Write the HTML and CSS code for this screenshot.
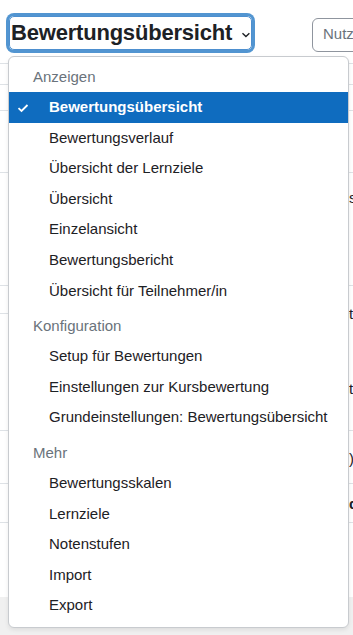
FILE: index.html
```html
<!DOCTYPE html>
<html lang="de">
<head>
<meta charset="utf-8">
<title>Bewertungsübersicht</title>
<link rel="stylesheet" href="styles.css">
</head>
<body>
<div class="page">
  <div class="toolbar">
    <div class="select">
      <span class="select-label">Bewertungsübersicht</span>
      <svg class="chev" width="10" height="6" viewBox="0 0 10 6"><path d="M1.5 1.2 L5 4.6 L8.5 1.2" fill="none" stroke="#1d2125" stroke-width="1.4"/></svg>
    </div>
    <div class="divider"></div>
    <div class="search">Nutzer/in suchen</div>
  </div>
  <div class="table">
    <div class="row r1"></div>
    <div class="row r2"></div>
    <div class="row r3"></div>
    <div class="row r4"><span class="frag">s</span></div>
    <div class="row r5"><span class="frag">t</span></div>
    <div class="row r6"><span class="frag">t</span></div>
    <div class="row r7"><span class="frag">)</span></div>
    <div class="row r8"><span class="frag">d</span></div>
  </div>
  <div class="footer"></div>

  <div class="menu">
    <div class="header first">Anzeigen</div>
    <div class="item active">
      <svg class="check" width="12" height="10" viewBox="0 0 12 10"><path d="M1.5 5.2 L4.5 8 L10.5 2" fill="none" stroke="#fff" stroke-width="1.8"/></svg>
      Bewertungsübersicht
    </div>
    <div class="item">Bewertungsverlauf</div>
    <div class="item">Übersicht der Lernziele</div>
    <div class="item">Übersicht</div>
    <div class="item">Einzelansicht</div>
    <div class="item">Bewertungsbericht</div>
    <div class="item">Übersicht für Teilnehmer/in</div>
    <div class="header">Konfiguration</div>
    <div class="item">Setup für Bewertungen</div>
    <div class="item">Einstellungen zur Kursbewertung</div>
    <div class="item">Grundeinstellungen: Bewertungsübersicht</div>
    <div class="header">Mehr</div>
    <div class="item">Bewertungsskalen</div>
    <div class="item">Lernziele</div>
    <div class="item">Notenstufen</div>
    <div class="item">Import</div>
    <div class="item">Export</div>
  </div>
</div>
</body>
</html>
```
FILE: styles.css
```css
* { box-sizing: border-box; }
html, body { margin: 0; padding: 0; }
body {
  font-family: "Liberation Sans", Arial, sans-serif;
  color: #1d2125;
  background: #fff;
}
.page {
  position: relative;
  width: 353px;
  height: 635px;
  overflow: hidden;
  display: flex;
  flex-direction: column;
}
.toolbar {
  display: flex;
  align-items: flex-start;
  height: 63px;
  padding: 16px 0 0 9px;
  flex-shrink: 0;
}
.select {
  display: flex;
  align-items: center;
  height: 34px;
  width: 243px;
  padding: 0 0 0 1px;
  border: 1px solid #4d8fcf;
  border-radius: 5px;
  box-shadow: 0 0 0 3px rgba(15,108,191,.72);
}
.select-label {
  font-size: 22px;
  font-weight: bold;
  letter-spacing: -0.2px;
  white-space: nowrap;
}
.chev { margin-left: 9px; margin-top: 3px; }
.divider {
  width: 1px;
  height: 41px;
  margin: -1px 0 0 30px;
  background: #dee2e6;
}
.search {
  margin: 2px 0 0 30px;
  height: 34px;
  width: 140px;
  flex-shrink: 0;
  border: 1px solid #8f959e;
  border-radius: 6px;
  padding: 6px 0 0 10px;
  font-size: 15px;
  color: #6a737b;
  white-space: nowrap;
}
.table {
  flex: 1;
  border-top: 1px solid #dee2e6;
}
.row {
  border-bottom: 1px solid #dee2e6;
  position: relative;
}
.r1 { height: 21px; }
.r2 { height: 26px; }
.r3 { height: 62px; }
.r4 { height: 113px; }
.r5 { height: 28px; }
.r6 { height: 117px; }
.r7 { height: 53px; }
.r8 { height: 39px; }
.frag {
  position: absolute;
  left: 349px;
  font-size: 15px;
  line-height: 18px;
  color: #1d2125;
}
.r4 .frag { top: 16px; }
.r5 .frag { top: 19px; }
.r6 .frag { top: 66px; }
.r7 .frag { top: 19px; }
.r8 .frag { top: 11px; font-weight: bold; }
.footer {
  height: 38px;
  background: #f0f0f0;
  flex-shrink: 0;
}
.menu {
  position: absolute;
  left: 8px;
  top: 56px;
  width: 341px;
  height: 572px;
  background: #fff;
  border: 1px solid #c8cbcf;
  border-radius: 6px;
  box-shadow: 0 2px 4px rgba(0,0,0,.08);
  padding: 0 0 8px;
  font-size: 15px;
}
.header {
  height: 35px;
  padding: 11px 0 0 24px;
  color: #6a737b;
  line-height: 18px;
}
.item {
  position: relative;
  height: 30.6px;
  line-height: 30.6px;
  padding-left: 40px;
  color: #1d2125;
  white-space: nowrap;
}
.item.active {
  background: #0f6cbf;
  color: #fff;
  font-weight: bold;
}
.check {
  position: absolute;
  left: 8px;
  top: 11px;
}
```
